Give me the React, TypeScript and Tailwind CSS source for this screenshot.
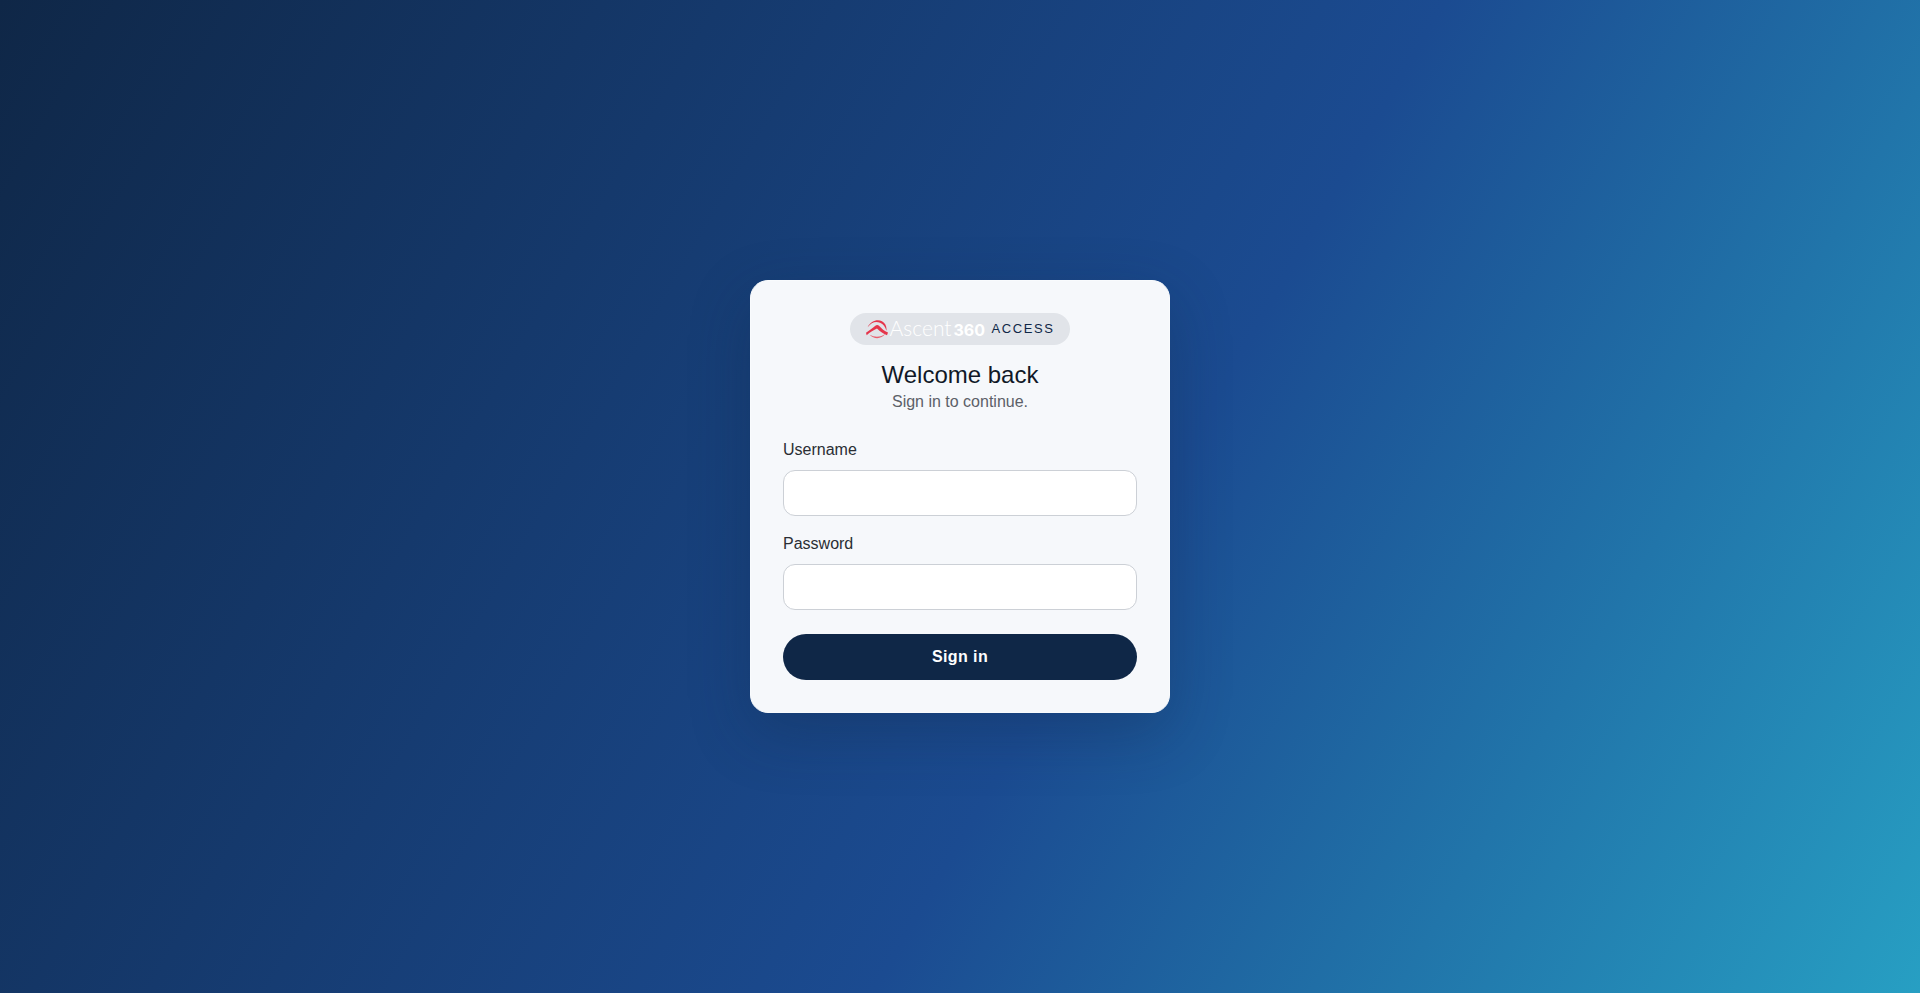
import { useState } from "react";
import type { FormEvent } from "react";

function AscentMark() {
  return (
    <svg viewBox="0 0 66 56" className="w-[22px] h-[19px] shrink-0" aria-hidden="true">
      {/* Outer ring, open on both sides of the peak */}
      <path d="M5 21 C14 2 34 -4 48 3 C59 9 63 20 61 32 C58 20 52 12 42 8 C29 2 16 7 5 21 Z" fill="#e5354b" />
      <path d="M11 44 C24 58 46 58 58 41 C46 51 27 53 11 44 Z" fill="#e8606f" />
      {/* Peak */}
      <path
        d="M0 38 C10 32 20 23 28 17 C31 14 36 14 39 17 C47 25 55 34 66 37 L63 45 C52 42 43 34 33 25 C24 29 12 36 2 45 Z"
        fill="#e5354b"
      />
    </svg>
  );
}

function AscentLogo() {
  return (
    <div className="flex items-center gap-0.5 w-[118px] text-white" aria-label="Ascent360">
      <AscentMark />
      <div className="flex items-baseline gap-0.5 leading-5">
        <span className="font-['Lato'] font-light text-[21px]">Ascent</span>
        <span className="font-['Inter'] font-bold text-[16px]">360</span>
      </div>
    </div>
  );
}

interface FieldProps {
  id: string;
  label: string;
  type: string;
  value: string;
  onChange: (value: string) => void;
}

function Field({ id, label, type, value, onChange }: FieldProps) {
  return (
    <div className="flex flex-col gap-2">
      <label htmlFor={id} className="text-[#2a2e34]">
        {label}
      </label>
      <input
        id={id}
        name={id}
        type={type}
        value={value}
        onChange={(e) => onChange(e.target.value)}
        className="w-full h-[46px] px-3.5 rounded-xl border border-[#ccd0d6] bg-white text-[#212529] outline-none focus:border-[#1b4b91]"
      />
    </div>
  );
}

export default function App() {
  const [username, setUsername] = useState("");
  const [password, setPassword] = useState("");

  const handleSubmit = (e: FormEvent) => {
    e.preventDefault();
  };

  return (
    <main className="min-h-screen flex items-center justify-center bg-[linear-gradient(120deg,#0f2747_0%,#1b4b91_58%,#279fc3_100%)] font-['Liberation_Sans',sans-serif] text-base">
      <div className="w-full max-w-[420px] p-8 rounded-[18px] border border-[#f9fbfd] bg-[#f6f8fb] shadow-[0_20px_60px_rgba(15,39,71,0.3)]">
        {/* Brand and greeting */}
        <div className="flex flex-col items-center text-center mb-6">
          <div className="flex items-center gap-2 h-8 px-4 mb-4 rounded-full bg-[#e1e4e9]">
            <AscentLogo />
            <span className="text-[13px] tracking-[0.12em] uppercase text-[#0f2747]">Access</span>
          </div>
          <h1 className="text-2xl leading-7 mb-px text-[#111827]">Welcome back</h1>
          <p className="text-[#5c6068]">Sign in to continue.</p>
        </div>

        <form onSubmit={handleSubmit} className="flex flex-col gap-4">
          <Field id="username" label="Username" type="text" value={username} onChange={setUsername} />
          <Field id="password" label="Password" type="password" value={password} onChange={setPassword} />
          <button
            type="submit"
            className="mt-2 w-full h-[46px] rounded-full bg-[#0f2747] text-white font-bold tracking-wide cursor-pointer hover:bg-[#16345d] transition-colors"
          >
            Sign in
          </button>
        </form>
      </div>
    </main>
  );
}
